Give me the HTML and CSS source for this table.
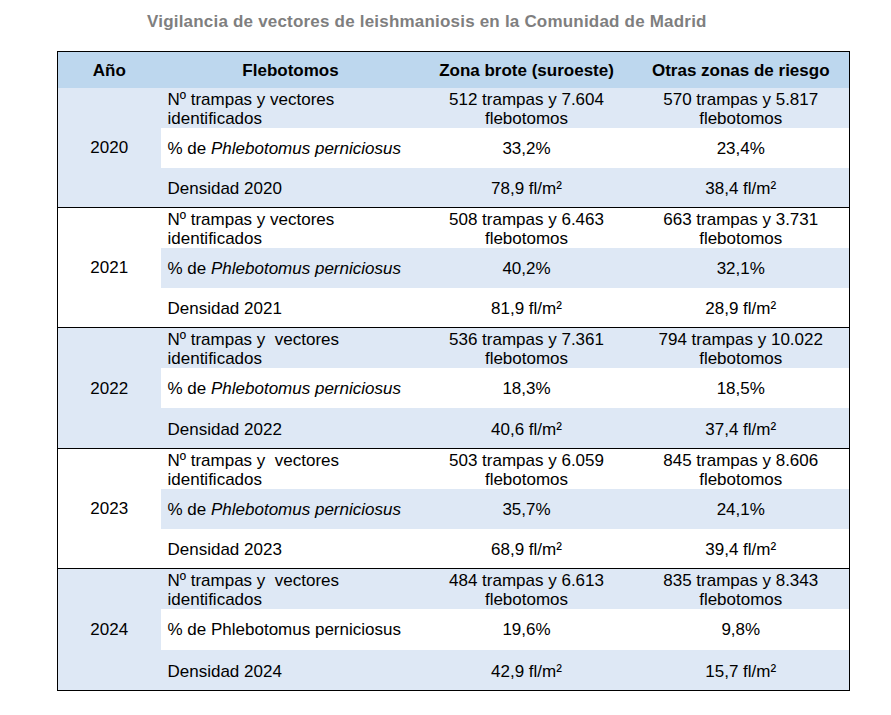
FILE: index.html
```html
<!DOCTYPE html>
<html lang="es">
<head>
<meta charset="utf-8">
<title>Vigilancia de vectores de leishmaniosis</title>
<link rel="stylesheet" href="styles.css">
</head>
<body>
<div class="page">
  <h1 class="title">Vigilancia de vectores de leishmaniosis en la Comunidad de Madrid</h1>
  <table class="data">
    <colgroup>
      <col class="c-year"><col class="c-fleb"><col class="c-zona"><col class="c-otras">
    </colgroup>
    <thead>
      <tr class="head"><th>Año</th><th>Flebotomos</th><th>Zona brote (suroeste)</th><th>Otras zonas de riesgo</th></tr>
    </thead>
    <tbody class="grp light">
      <tr class="r1"><td class="year" rowspan="3">2020</td><td class="lbl">Nº trampas y vectores identificados</td><td>512 trampas y 7.604 flebotomos</td><td>570 trampas y 5.817 flebotomos</td></tr>
      <tr class="r2"><td class="lbl">% de <i>Phlebotomus perniciosus</i></td><td>33,2%</td><td>23,4%</td></tr>
      <tr class="r3"><td class="lbl">Densidad 2020</td><td>78,9 fl/m²</td><td>38,4 fl/m²</td></tr>
    </tbody>
    <tbody class="grp white">
      <tr class="r1"><td class="year" rowspan="3">2021</td><td class="lbl">Nº trampas y vectores identificados</td><td>508 trampas y 6.463 flebotomos</td><td>663 trampas y 3.731 flebotomos</td></tr>
      <tr class="r2"><td class="lbl">% de <i>Phlebotomus perniciosus</i></td><td>40,2%</td><td>32,1%</td></tr>
      <tr class="r3"><td class="lbl">Densidad 2021</td><td>81,9 fl/m²</td><td>28,9 fl/m²</td></tr>
    </tbody>
    <tbody class="grp light">
      <tr class="r1"><td class="year" rowspan="3">2022</td><td class="lbl">Nº trampas y&nbsp; vectores identificados</td><td>536 trampas y 7.361 flebotomos</td><td>794 trampas y 10.022 flebotomos</td></tr>
      <tr class="r2"><td class="lbl">% de <i>Phlebotomus perniciosus</i></td><td>18,3%</td><td>18,5%</td></tr>
      <tr class="r3 plus1"><td class="lbl">Densidad 2022</td><td>40,6 fl/m²</td><td>37,4 fl/m²</td></tr>
    </tbody>
    <tbody class="grp white">
      <tr class="r1"><td class="year" rowspan="3">2023</td><td class="lbl">Nº trampas y&nbsp; vectores identificados</td><td>503 trampas y 6.059 flebotomos</td><td>845 trampas y 8.606 flebotomos</td></tr>
      <tr class="r2"><td class="lbl">% de <i>Phlebotomus perniciosus</i></td><td>35,7%</td><td>24,1%</td></tr>
      <tr class="r3"><td class="lbl">Densidad 2023</td><td>68,9 fl/m²</td><td>39,4 fl/m²</td></tr>
    </tbody>
    <tbody class="grp light">
      <tr class="r1"><td class="year" rowspan="3">2024</td><td class="lbl">Nº trampas y&nbsp; vectores identificados</td><td>484 trampas y 6.613 flebotomos</td><td>835 trampas y 8.343 flebotomos</td></tr>
      <tr class="r2 plus1"><td class="lbl">% de Phlebotomus perniciosus</td><td>19,6%</td><td>9,8%</td></tr>
      <tr class="r3 plus1"><td class="lbl">Densidad 2024</td><td>42,9 fl/m²</td><td>15,7 fl/m²</td></tr>
    </tbody>
  </table>
</div>
</body>
</html>
```
FILE: styles.css
```css
html, body {
  margin: 0;
  padding: 0;
  background: #ffffff;
}
body {
  font-family: "Liberation Sans", Arial, sans-serif;
  color: #000;
}
.page {
  padding: 12px 0 0 57px;
  width: 792px;
}
.title {
  margin: 0 0 20px 90px;
  font-size: 17px;
  font-weight: bold;
  color: #7f7f7f;
  line-height: 19px;
  letter-spacing: 0.2px;
  white-space: nowrap;
}
.data {
  border-collapse: collapse;
  width: 792px;
  table-layout: fixed;
  border: 1px solid #000;
  font-size: 17px;
}
.c-year { width: 103px; }
.c-fleb { width: 260px; }
.c-zona { width: 212px; }
.c-otras { width: 217px; }

.data th, .data td {
  padding: 0;
  text-align: center;
  vertical-align: middle;
  font-weight: normal;
  line-height: 19px;
}
.head th {
  height: 35px;
  background: #bdd7ee;
  font-weight: bold;
  padding-top: 1px;
}
.grp {
  border-top: 1px solid #000;
}
thead + .grp { border-top: none; }

.data td.lbl {
  text-align: left;
  padding-left: 7px;
}
.r1 td { height: 38px; padding-top: 2px; }
.r1 td.year { padding-top: 0; height: auto; }
.r2 td { height: 40px; }
.r3 td { height: 37px; padding-top: 2px; }
.r2.plus1 td { height: 41px; }
.r3.plus1 td { height: 38px; }

.light .year,
.light .r1 td,
.light .r3 td { background: #dee8f5; }
.light .r2 td { background: #ffffff; }

.white .year,
.white .r1 td,
.white .r3 td { background: #ffffff; }
.white .r2 td { background: #dee8f5; }
```
